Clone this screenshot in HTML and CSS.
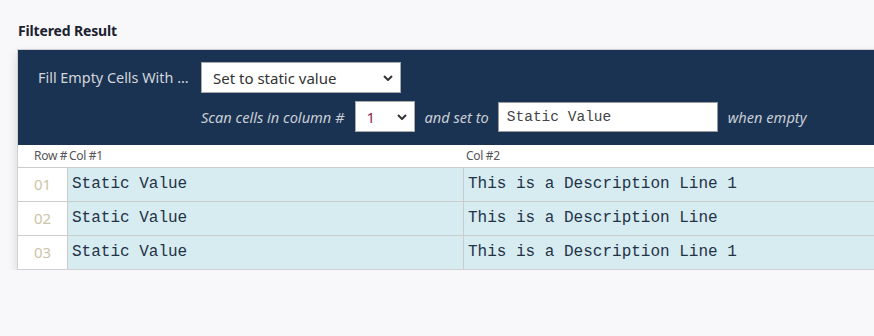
FILE: index.html
```html
<!DOCTYPE html>
<html>
<head>
<meta charset="utf-8">
<link rel="stylesheet" href="styles.css">
</head>
<body>
<div class="page">
  <h2 class="title">Filtered Result</h2>
  <div class="panel">
    <div class="controls">
      <div class="ctrl-row">
        <span class="lbl">Fill Empty Cells With ...</span>
        <div class="sel sel-wide">
          <select><option>Set to static value</option></select>
          <svg class="chev" viewBox="0 0 10 6" width="10" height="6"><path d="M1 1l4 4 4-4" fill="none" stroke="#333" stroke-width="2"/></svg>
        </div>
      </div>
      <div class="ctrl-row ctrl-row2">
        <span class="ital">Scan cells in column #</span>
        <div class="sel sel-num">
          <select><option>1</option></select>
          <svg class="chev" viewBox="0 0 10 6" width="10" height="6"><path d="M1 1l4 4 4-4" fill="none" stroke="#333" stroke-width="2"/></svg>
        </div>
        <span class="ital">and set to</span>
        <input class="txt" type="text" value="Static Value">
        <span class="ital">when empty</span>
      </div>
    </div>
    <div class="grid">
      <div class="hd c0">Row #</div>
      <div class="hd c1">Col #1</div>
      <div class="hd c2">Col #2</div>

      <div class="num">01</div>
      <div class="cell c1">Static Value</div>
      <div class="cell c2">This is a Description Line 1</div>

      <div class="num">02</div>
      <div class="cell c1">Static Value</div>
      <div class="cell c2">This is a Description Line</div>

      <div class="num">03</div>
      <div class="cell c1">Static Value</div>
      <div class="cell c2">This is a Description Line 1</div>
    </div>
  </div>
</div>
</body>
</html>
```
FILE: styles.css
```css
html, body {
  margin: 0;
  padding: 0;
  background: #f8f8fa;
  overflow: hidden;
  font-family: "Noto Sans", "Open Sans", sans-serif;
}
.page {
  padding: 21px 0 0 17px;
  width: 1100px;
}
.title {
  margin: 0 0 9px 1px;
  font-size: 14px;
  font-weight: 700;
  color: #1b2230;
  line-height: 19px;
  letter-spacing: -0.15px;
}
.panel {
  border: 1px solid #cfcfd4;
  border-right: none;
  background: #fff;
  box-shadow: 0 5px 10px rgba(0, 0, 0, 0.14);
  width: 1000px;
}
.controls {
  background: #1b3352;
  padding: 12px 0 13px 0;
  display: flex;
  flex-direction: column;
  gap: 8px;
}
.ctrl-row {
  display: flex;
  align-items: center;
  gap: 10px;
}
.lbl {
  flex: 0 0 183px;
  padding-left: 20px;
  box-sizing: border-box;
  margin-right: -10px;
  color: #d2d6dc;
  font-size: 14.4px;
  white-space: nowrap;
}
.ctrl-row2 {
  padding-left: 183px;
}
.ital {
  color: #c9ced6;
  font-style: italic;
  font-size: 14.6px;
  white-space: nowrap;
}
.sel {
  position: relative;
  display: flex;
}
.sel select {
  appearance: none;
  -webkit-appearance: none;
  border: 1px solid #a9a9a9;
  background: #fff;
  height: 31px;
  border-radius: 0;
  font-family: "Noto Sans", "Open Sans", sans-serif;
  font-size: 15px;
  color: #333;
  padding: 0 0 0 11px;
  margin: 0;
  outline: none;
}
.sel-wide select { width: 200px; }
.sel-num select { width: 60px; color: #8a1f4e; }
.chev {
  position: absolute;
  right: 8px;
  top: 13px;
  pointer-events: none;
}
.txt {
  width: 220px;
  height: 30px;
  box-sizing: border-box;
  border: 1px solid #9a9a9a;
  margin: 0 0 0 -1px;
  padding: 0 0 0 8px;
  font-family: "Liberation Mono", "Courier New", monospace;
  font-size: 14.5px;
  color: #444;
  outline: none;
}
.grid {
  display: grid;
  grid-template-columns: 50px 396px 1fr;
  font-family: "Noto Sans", "Open Sans", sans-serif;
}
.hd {
  font-size: 12px;
  color: #555;
  height: 22px;
  line-height: 22px;
  border-bottom: 1px solid #cccccc;
  background: #fff;
  letter-spacing: -0.3px;
}
.hd.c0 { padding-left: 16px; white-space: nowrap; }
.hd.c1 { padding-left: 1px; }
.hd.c2 { padding-left: 2px; }
.num {
  height: 33px;
  line-height: 33px;
  border-bottom: 1px solid #cccccc;
  border-right: 1px solid #cccccc;
  text-align: center;
  color: #cdc4a8;
  font-size: 15px;
  background: #fff;
}
.cell {
  height: 33px;
  line-height: 33px;
  border-bottom: 1px solid #cccccc;
  background: #d6ecf0;
  font-family: "Liberation Mono", "Courier New", monospace;
  font-size: 16px;
  color: #243247;
  padding-left: 4px;
}
.cell.c1 { border-right: 1px solid #cccccc; }
.grid > :nth-last-child(-n+3) { border-bottom: none; }
```
